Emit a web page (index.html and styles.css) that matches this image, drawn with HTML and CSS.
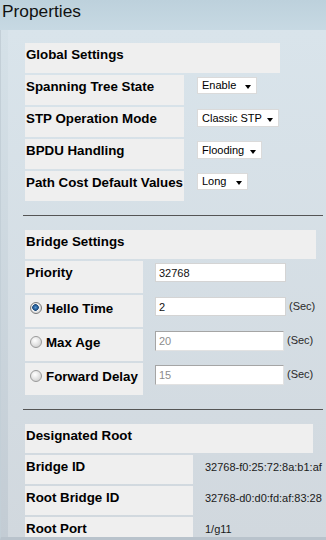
FILE: index.html
```html
<!DOCTYPE html>
<html>
<head>
<meta charset="utf-8">
<title>Properties</title>
<link rel="stylesheet" href="styles.css">
</head>
<body>
<div class="page">
  <header class="titlebar"><h1 class="title">Properties</h1></header>
  <main class="panel">
    <section class="group group-global">
      <div class="group-head">Global Settings</div>
      <div class="row row-global">
        <div class="label">Spanning Tree State</div>
        <div class="value"><span class="select sel-enable"><span>Enable</span><i class="caret"></i></span></div>
      </div>
      <div class="row row-global">
        <div class="label">STP Operation Mode</div>
        <div class="value"><span class="select sel-mode"><span>Classic STP</span><i class="caret"></i></span></div>
      </div>
      <div class="row row-global">
        <div class="label">BPDU Handling</div>
        <div class="value"><span class="select sel-bpdu"><span>Flooding</span><i class="caret"></i></span></div>
      </div>
      <div class="row row-global">
        <div class="label">Path Cost Default Values</div>
        <div class="value"><span class="select sel-cost"><span>Long</span><i class="caret"></i></span></div>
      </div>
    </section>

    <hr class="sep">

    <section class="group group-bridge">
      <div class="group-head">Bridge Settings</div>
      <div class="row row-bridge">
        <div class="label">Priority</div>
        <div class="value"><input class="field" type="text" value="32768" readonly></div>
      </div>
      <div class="row row-bridge">
        <div class="label label-radio"><span class="radio radio-on"></span>Hello Time</div>
        <div class="value"><input class="field" type="text" value="2" readonly><span class="unit">(Sec)</span></div>
      </div>
      <div class="row row-bridge">
        <div class="label label-radio"><span class="radio"></span>Max Age</div>
        <div class="value"><input class="field" type="text" value="20" disabled><span class="unit">(Sec)</span></div>
      </div>
      <div class="row row-bridge">
        <div class="label label-radio"><span class="radio"></span>Forward Delay</div>
        <div class="value"><input class="field" type="text" value="15" disabled><span class="unit">(Sec)</span></div>
      </div>
    </section>

    <hr class="sep">

    <section class="group group-root">
      <div class="group-head">Designated Root</div>
      <div class="row row-root">
        <div class="label">Bridge ID</div>
        <div class="value">32768-f0:25:72:8a:b1:af</div>
      </div>
      <div class="row row-root">
        <div class="label">Root Bridge ID</div>
        <div class="value">32768-d0:d0:fd:af:83:28</div>
      </div>
      <div class="row row-root">
        <div class="label">Root Port</div>
        <div class="value">1/g11</div>
      </div>
    </section>
  </main>
</div>
</body>
</html>
```

FILE: styles.css
```css
html, body {
  margin: 0;
  padding: 0;
}

body {
  width: 326px;
  height: 540px;
  overflow: hidden;
  font-family: "Liberation Sans", Arial, sans-serif;
  color: #000;
}

.page {
  display: flex;
  flex-direction: column;
  height: 540px;
}

.titlebar {
  flex: none;
  height: 30px;
  background: linear-gradient(#bdd1dc, #c7d9e3);
}

.title {
  margin: 0;
  padding: 1px 0 0 2px;
  font-size: 17.33px;
  font-weight: normal;
  line-height: 20px;
  color: #111;
}

.panel {
  flex: 1;
  box-sizing: border-box;
  overflow: hidden;
  padding: 13px 0 0 24px;
  border-left: 1px solid #c3cfd7;
  border-bottom: 3px solid #b9c3cc;
  background:
    linear-gradient(#d5e1e8, #c3ccd4) 0 0 / 7px 100% no-repeat,
    linear-gradient(#d9e4eb, #d1d8de);
}

.group-head {
  box-sizing: border-box;
  height: 30px;
  padding: 4px 0 0 1px;
  font-size: 13.33px;
  font-weight: bold;
  line-height: 16px;
  background: #efefef;
}

.group-global .group-head { width: 255px; }
.group-bridge .group-head { width: 291px; height: 29px; }
.group-root .group-head { width: 288px; height: 29px; }

.row {
  display: flex;
  margin-top: 2px;
}

.label {
  box-sizing: border-box;
  flex: none;
  padding: 4px 0 0 1px;
  font-size: 13.33px;
  font-weight: bold;
  line-height: 16px;
  white-space: nowrap;
  background: #efefef;
}

/* Global settings rows */
.row-global { height: 30px; }
.row-global .label { width: 159px; }
.row-global .value { padding: 2px 0 0 13px; }

.select {
  display: flex;
  align-items: center;
  justify-content: space-between;
  box-sizing: border-box;
  height: 17px;
  padding: 0 5px 0 4px;
  font-size: 11px;
  line-height: 15px;
  color: #000;
  background: #fff;
  border: 1px solid #dadada;
}

.sel-enable { width: 60px; }
.sel-mode { width: 82px; height: 18px; }
.sel-bpdu { width: 65px; height: 18px; }
.sel-cost { width: 51px; }

.caret {
  width: 0;
  height: 0;
  margin-top: 3px;
  border-left: 3.5px solid transparent;
  border-right: 3.5px solid transparent;
  border-top: 4px solid #000;
}

/* Bridge settings rows */
.row-bridge { height: 32px; }
.row-bridge .label { width: 118px; }
.row-bridge .value {
  display: flex;
  align-items: flex-start;
  gap: 3px;
  padding: 2px 0 0 12px;
}

.label-radio {
  display: flex;
  align-items: flex-start;
  gap: 4px;
  padding: 6px 0 0 5px;
}

.radio {
  flex: none;
  box-sizing: border-box;
  width: 12px;
  height: 12px;
  margin-top: 1px;
  border-radius: 50%;
  border: 1px solid #9a9a9a;
  background: radial-gradient(circle at 40% 35%, #ffffff 0, #e6e6e6 45%, #c4c4c4 100%);
}

.radio-on {
  border-color: #7b7b7b;
  background: radial-gradient(circle at 45% 45%, #5b9bd5 0, #2a64a0 1.8px, #1d4b7c 3px, #f2f2f2 3.6px, #dedede 5px);
}

.field {
  box-sizing: border-box;
  width: 131px;
  height: 19px;
  margin: 0;
  padding: 0 3px;
  font-family: inherit;
  font-size: 11px;
  color: #111;
  background: #fff;
  border: 1px solid #d4d4d4;
  border-radius: 0;
  outline: none;
}

.field:disabled {
  width: 129px;
  height: 20px;
  color: #8c8c8c;
  -webkit-text-fill-color: #8c8c8c;
  background: #fff;
  border-color: #a5a5a5 #e2e2e2 #e2e2e2 #a5a5a5;
}

.unit {
  font-size: 11px;
  line-height: 19px;
  color: #2a2a2a;
}

/* Designated root rows */
.row-root { height: 29px; }
.row-root .label { width: 168px; }
.row-root .value {
  padding: 4px 0 0 12px;
  font-size: 11px;
  line-height: 17px;
  color: #1a1a1a;
  white-space: nowrap;
}

.sep {
  width: 300px;
  height: 1px;
  margin: 14px 0 14px -2px;
  border: 0;
  background: #555;
}
```
